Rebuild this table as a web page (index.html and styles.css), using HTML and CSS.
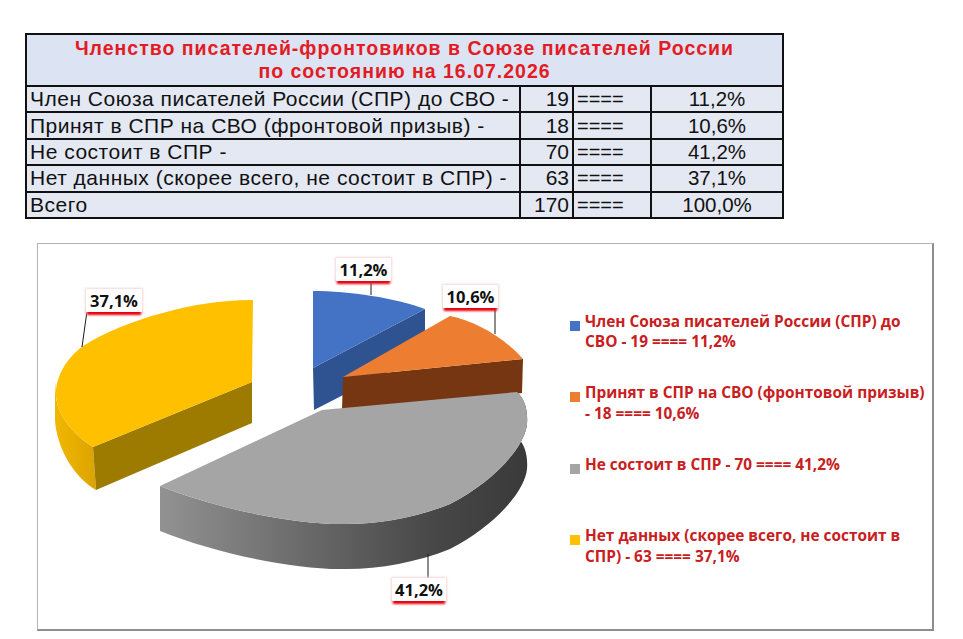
FILE: index.html
```html
<!DOCTYPE html>
<html lang="ru">
<head>
<meta charset="utf-8">
<title>Членство писателей-фронтовиков</title>
<link rel="stylesheet" href="styles.css">
</head>
<body>
<table class="stats">
  <colgroup>
    <col class="c-name"><col class="c-num"><col class="c-eq"><col class="c-pct">
  </colgroup>
  <tr class="head">
    <th colspan="4">Членство писателей-фронтовиков в Союзе писателей России<br>по состоянию на 16.07.2026</th>
  </tr>
  <tr><td class="name">Член Союза писателей России (СПР) до СВО -</td><td class="num">19</td><td class="eq">====</td><td class="pct">11,2%</td></tr>
  <tr><td class="name">Принят в СПР на СВО (фронтовой призыв) -</td><td class="num">18</td><td class="eq">====</td><td class="pct">10,6%</td></tr>
  <tr><td class="name">Не состоит в СПР -</td><td class="num">70</td><td class="eq">====</td><td class="pct">41,2%</td></tr>
  <tr><td class="name">Нет данных (скорее всего, не состоит в СПР) -</td><td class="num">63</td><td class="eq">====</td><td class="pct">37,1%</td></tr>
  <tr><td class="name">Всего</td><td class="num">170</td><td class="eq">====</td><td class="pct">100,0%</td></tr>
</table>

<div class="chart">
  <svg class="pie" width="532" height="385" viewBox="38 243 532 385" xmlns="http://www.w3.org/2000/svg">
    <defs>
      <linearGradient id="greySide" x1="160" y1="0" x2="527" y2="0" gradientUnits="userSpaceOnUse">
        <stop offset="0" stop-color="#929292"/>
        <stop offset="0.45" stop-color="#646464"/>
        <stop offset="0.75" stop-color="#474747"/>
        <stop offset="1" stop-color="#3a3a3a"/>
      </linearGradient>
      <linearGradient id="yellowSide" x1="55" y1="0" x2="96" y2="0" gradientUnits="userSpaceOnUse">
        <stop offset="0" stop-color="#f2b700"/>
        <stop offset="1" stop-color="#dba300"/>
      </linearGradient>
      <filter id="blur" x="-20%" y="-60%" width="140%" height="220%">
        <feGaussianBlur stdDeviation="0.8"/>
      </filter>
      <filter id="soft" x="-20%" y="-40%" width="140%" height="180%">
        <feGaussianBlur stdDeviation="1.2"/>
      </filter>
    </defs>

    <!-- yellow 37,1% -->
    <path fill="url(#yellowSide)" d="M55,380 L55,420 C57,445 72,475 96,489 L93,446 C75,435 57,415 56,395 Z"/>
    <path fill="#9d7b00" d="M93,446 L252,381 L252,422 L96,489 Z"/>
    <path fill="#ffc000" d="M252,381 L253,299 C200,298 125,318 83,345 C65,358 55,378 56,395 C57,415 75,435 93,446 Z"/>

    <!-- blue 11,2% -->
    <path fill="#2f5291" d="M313,367 L425,308 L425,352 L314,409 Z"/>
    <path fill="#4472c4" d="M313,367 L313,290 C350,290 395,297 425,308 Z"/>

    <!-- orange 10,6% -->
    <path fill="#763611" d="M343,376 L523,358 L522,392 L342,408 Z"/>
    <path fill="#ed7d31" d="M343,376 L450,315 C475,320 505,337 523,358 Z"/>

    <!-- grey 41,2% -->
    <path fill="url(#greySide)" d="M160,485 C215,507 290,523 340,523 C375,524 415,517 450,503 C495,480 525,445 527,423 C528,410 525,398 517,391 L517,436 C525,443 528,455 527,468 C525,490 495,525 450,548 C415,562 375,569 340,568 C290,568 215,552 160,530 Z"/>
    <path fill="#a5a5a5" d="M322,409 L517,391 C525,398 528,410 527,423 C525,445 495,480 450,503 C415,517 375,524 340,523 C290,523 215,507 160,485 Z"/>

    <!-- leader lines -->
    <g stroke="#1a1a1a" stroke-width="1">
      <line x1="371" y1="282" x2="371" y2="294"/>
      <line x1="495" y1="307" x2="495" y2="333"/>
      <line x1="88" y1="303" x2="82" y2="346"/>
      <line x1="428" y1="553" x2="428" y2="577"/>
    </g>

    <!-- data labels -->
    <g class="lbl">
      <rect class="lbl-halo" x="335" y="256" width="57" height="26" filter="url(#soft)"/>
      <rect class="lbl-shadow" x="337" y="278" width="53" height="5" filter="url(#blur)"/>
      <rect class="lbl-box" x="336" y="257" width="55" height="23"/>
      <text x="363.5" y="274.5" text-anchor="middle">11,2%</text>
    </g>
    <g class="lbl">
      <rect class="lbl-halo" x="442" y="283" width="57" height="26" filter="url(#soft)"/>
      <rect class="lbl-shadow" x="444" y="305" width="53" height="5" filter="url(#blur)"/>
      <rect class="lbl-box" x="443" y="284" width="55" height="23"/>
      <text x="470.5" y="301.5" text-anchor="middle">10,6%</text>
    </g>
    <g class="lbl">
      <rect class="lbl-halo" x="85" y="287" width="58" height="26" filter="url(#soft)"/>
      <rect class="lbl-shadow" x="87" y="309" width="54" height="5" filter="url(#blur)"/>
      <rect class="lbl-box" x="86" y="288" width="56" height="23"/>
      <text x="114" y="305.5" text-anchor="middle">37,1%</text>
    </g>
    <g class="lbl">
      <rect class="lbl-halo" x="391" y="576" width="56" height="26" filter="url(#soft)"/>
      <rect class="lbl-shadow" x="393" y="598" width="52" height="5" filter="url(#blur)"/>
      <rect class="lbl-box" x="392" y="577" width="54" height="23"/>
      <text x="419" y="594.5" text-anchor="middle">41,2%</text>
    </g>
  </svg>

  <ul class="legend">
    <li class="item"><span class="swatch sw-blue"></span><span class="txt">Член Союза писателей России (СПР) до<br>СВО - 19 ==== 11,2%</span></li>
    <li class="item"><span class="swatch sw-orange"></span><span class="txt">Принят в СПР на СВО (фронтовой призыв)<br>- 18 ==== 10,6%</span></li>
    <li class="item"><span class="swatch sw-grey"></span><span class="txt">Не состоит в СПР - 70 ==== 41,2%</span></li>
    <li class="item"><span class="swatch sw-yellow"></span><span class="txt">Нет данных (скорее всего, не состоит в<br>СПР) - 63 ==== 37,1%</span></li>
  </ul>
</div>
</body>
</html>
```
FILE: styles.css
```css
html, body {
  margin: 0;
  padding: 0;
  background: #ffffff;
}

body {
  font-family: "Liberation Sans", Arial, sans-serif;
  color: #111;
}

.stats {
  margin: 33px 0 0 25px;
  width: 757px;
  table-layout: fixed;
  border-collapse: collapse;
  border: 2px solid #111;
  background: #e4e8f3;
  font-size: 20px;
}

.c-name { width: 494px; }
.c-num { width: 53px; }
.c-eq { width: 78px; }
.c-pct { width: 132px; }

.stats th,
.stats td {
  border: 2px solid #111;
  padding: 0;
  white-space: nowrap;
  line-height: 22px;
}

.stats .head th {
  height: 50px;
  background: #dce3f2;
  color: #e31b25;
  font-weight: bold;
  font-size: 19.5px;
  letter-spacing: 1px;
  line-height: 23px;
  text-align: center;
  vertical-align: middle;
}

.stats td {
  height: 24.4px;
  vertical-align: middle;
}

.stats .name {
  padding-left: 3px;
  font-size: 21px;
  letter-spacing: 0.5px;
}
.stats .num { text-align: right; padding-right: 3px; font-size: 21px; }
.stats .eq { padding-left: 3px; }
.stats .pct { text-align: center; font-size: 20.5px; }

.chart {
  box-sizing: border-box;
  display: flex;
  margin: 24px 0 0 37px;
  width: 897px;
  height: 388px;
  border-top: 1px solid #b4b4b4;
  border-left: 1px solid #b4b4b4;
  border-right: 2px solid #8e8e8e;
  border-bottom: 2px solid #8e8e8e;
}

.pie {
  display: block;
  flex: none;
}

.lbl-box { fill: #ffffff; }
.lbl-halo { fill: #f3d6d6; }
.lbl-shadow { fill: #e8000b; }
.lbl text {
  font-family: "Open Sans", "Liberation Sans", sans-serif;
  font-weight: bold;
  font-size: 16.5px;
  fill: #111;
}

.legend {
  list-style: none;
  margin: 0;
  padding: 68px 0 0 0;
  font-family: "Open Sans", "Liberation Sans", sans-serif;
  font-weight: bold;
  font-size: 15.4px;
  line-height: 20.5px;
  color: #c8201e;
}

.item {
  display: flex;
  gap: 5px;
  height: 71.5px;
}

.swatch {
  flex: none;
  width: 10px;
  height: 10px;
  margin-top: 9px;
}

.sw-blue { background: #4472c4; }
.sw-orange { background: #ed7d31; }
.sw-grey { background: #a5a5a5; }
.sw-yellow { background: #ffc000; }

.txt { white-space: nowrap; }
```
